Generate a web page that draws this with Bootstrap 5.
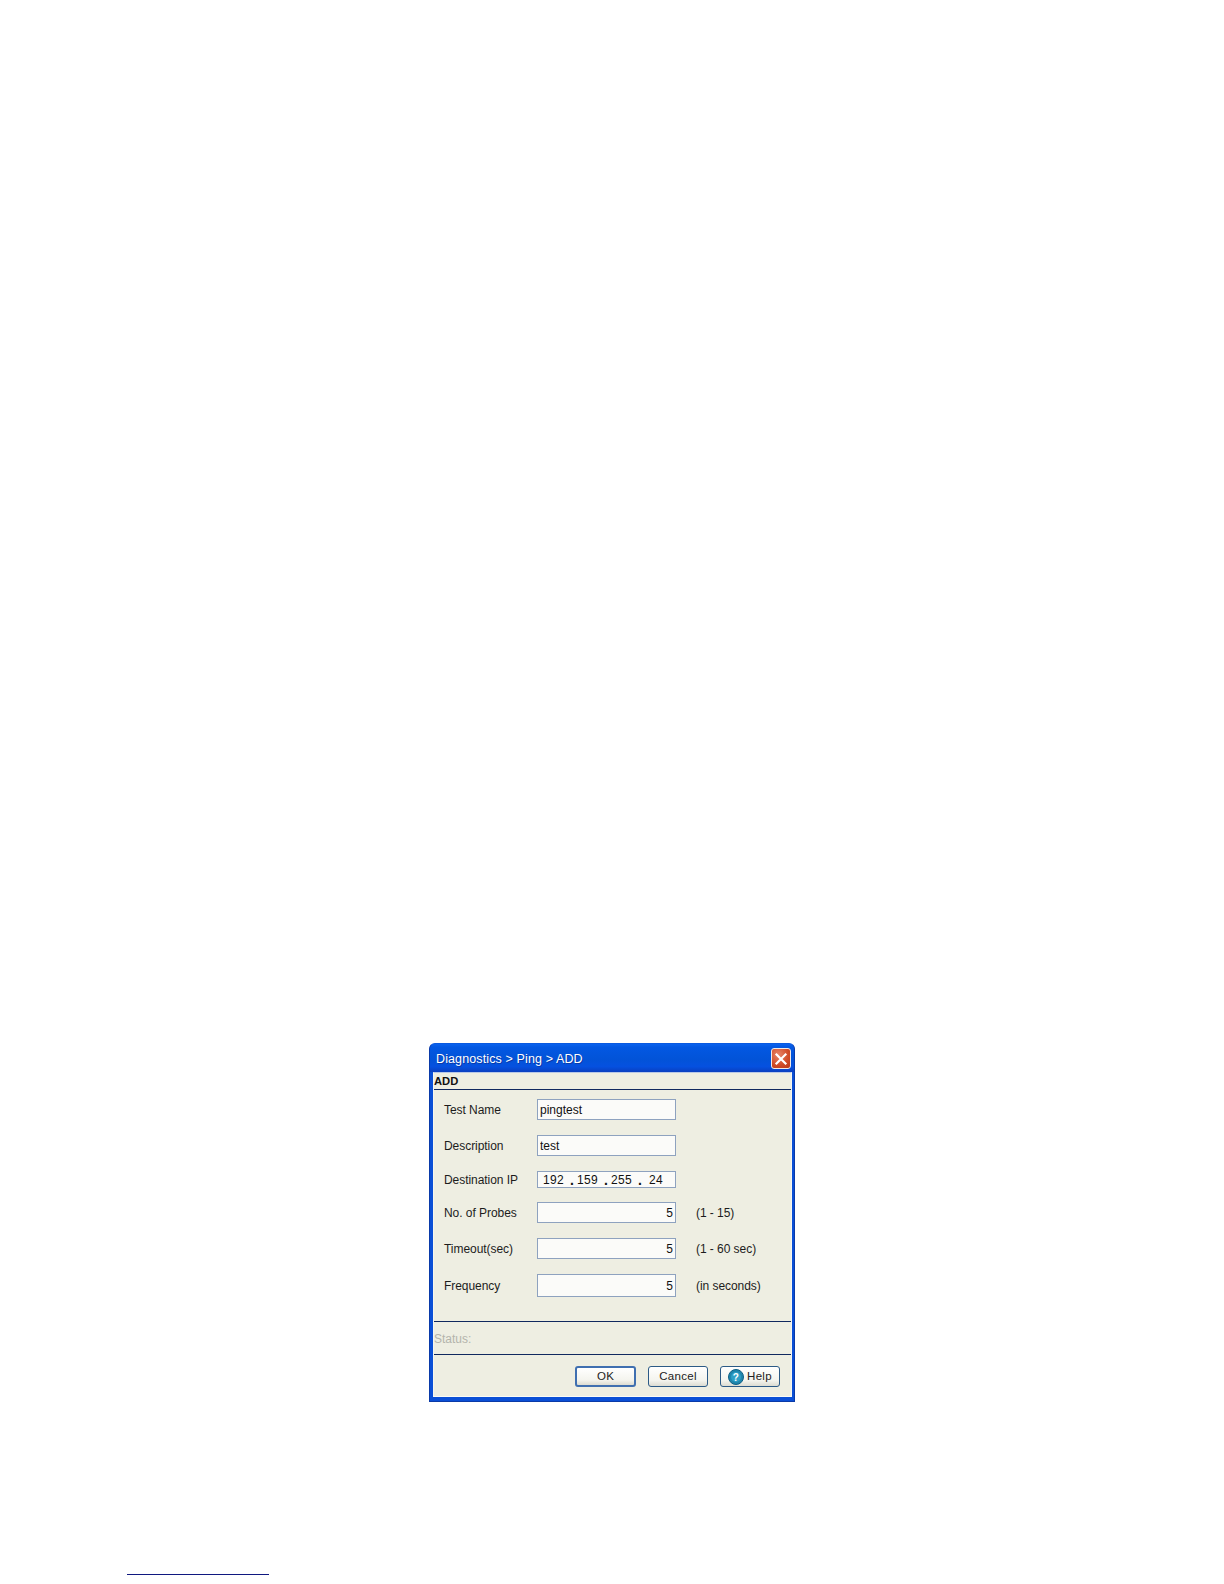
<!DOCTYPE html>
<html lang="en">
<head>
<meta charset="utf-8">
<title>Diagnostics &gt; Ping &gt; ADD</title>
<link rel="stylesheet" href="https://cdn.jsdelivr.net/npm/bootstrap@5.3.0/dist/css/bootstrap.min.css">
<style>
html,body{background:#fff;height:1584px;overflow:hidden}
body{font-family:"Liberation Sans",Arial,sans-serif;font-size:12px;color:#1c1c1c;padding-top:1043px}
.xp-window{width:366px;height:359px;margin-left:429px;background:#0a4fd6;border-radius:6px 6px 0 0;display:flex;flex-direction:column;border:1px solid #0a3aa8;border-top-color:#0a5ae0}
.xp-title{height:28px;flex:none;background:linear-gradient(180deg,#0a62ee 0%,#0358e2 12%,#0253d8 55%,#0551e0 80%,#0a3fc0 100%);border-radius:5px 5px 0 0;color:#fff;font-size:12.5px;letter-spacing:.12px;padding-left:6px;padding-right:3px;padding-top:3px;text-shadow:1px 1px 0 #0a3aa8}
.xp-close{width:20px;height:21px;padding:0;margin-top:-2px;border:1px solid #f3e9e4;border-radius:3px;background:radial-gradient(circle at 35% 30%,#e8866a,#cf4a25 60%,#b8391a);display:block}
.xp-close svg{display:block;margin:auto}
.xp-panel{flex:1;margin:0 2px 4px 3px;background:#eeeee2;border-top:1px solid #b9c8e6;border-left:1px solid #f6f6ee;border-right:1px solid #f6f6ee;border-bottom:1px solid #fbfbf5;display:flex;flex-direction:column;min-height:0}
.xp-head{height:17px;flex:none;border-bottom:1px solid #10285e;font-weight:700;font-size:11.2px;color:#111;line-height:17px}
.xp-form{padding:9px 0 0 10px;height:231px;flex:none}
.xp-row{display:flex;align-items:center;height:21px;margin-bottom:15px}
.xp-row.ip{height:17px;margin-bottom:14px}
.xp-row.last{height:23px;margin-bottom:0}
.xp-label{width:93px;flex:none;letter-spacing:-.05px;padding-top:1px}
.xp-note{margin-left:20px;letter-spacing:-.05px;padding-top:1px;font-size:12px}
.form-control.xp-input,.xp-ip{width:139px;height:100%;flex:none;padding:1px 2px 0;border:1px solid #8ea2bf;border-radius:0;background:#fbfbf9;font-size:12px;color:#111;box-shadow:none;line-height:1}
.xp-ip{display:flex;align-items:center;padding:0 0 0 5px;letter-spacing:.3px}
.xp-ip span{display:block}
.xp-oct{width:27px}
.xp-ip b{font-weight:700;font-size:14px;width:7px;display:block}
.xp-status{height:34px;flex:none;border-top:1px solid #10285e;border-bottom:1px solid #10285e;color:#b4b4ac;line-height:34px;font-size:12px}
.xp-foot{flex:1;display:flex;justify-content:flex-end;gap:12px;padding:11px 11px 0 0;align-items:flex-start}
.btn.xp-btn{width:60px;height:21px;padding:1px 0 0;border:1px solid #2c5a86;border-radius:3px;background:linear-gradient(180deg,#fff,#f4f4ee 70%,#dcdcd2);font-size:11.5px;color:#222;letter-spacing:.3px;line-height:1;display:flex;align-items:center;justify-content:center;gap:3px}
.btn.xp-btn.primary{border:2px solid #3f6fb0;width:61px}
.xp-help{display:block;width:16px;height:16px;flex:none}
.xp-rule{width:142px;height:1px;margin:172px 0 0 127px;background:#101880;border:0;opacity:1}
</style>
</head>
<body>
<div class="xp-window">
  <div class="xp-title d-flex align-items-center justify-content-between">
    <span>Diagnostics &gt; Ping &gt; ADD</span>
    <button type="button" class="xp-close" aria-label="Close"><svg width="14" height="14" viewBox="0 0 14 14"><path d="M2.5 2.5L11.5 11.5M11.5 2.5L2.5 11.5" stroke="#fff" stroke-width="2.2" stroke-linecap="square"/></svg></button>
  </div>
  <div class="xp-panel">
    <div class="xp-head">ADD</div>
    <div class="xp-form">
      <div class="xp-row"><span class="xp-label">Test Name</span><input class="form-control xp-input" value="pingtest"></div>
      <div class="xp-row"><span class="xp-label">Description</span><input class="form-control xp-input" value="test"></div>
      <div class="xp-row ip"><span class="xp-label">Destination IP</span><div class="xp-ip"><span class="xp-oct">192</span><b>.</b><span class="xp-oct">159</span><b>.</b><span class="xp-oct">255</span><b>.</b><span class="ms-1">24</span></div></div>
      <div class="xp-row"><span class="xp-label">No. of Probes</span><input class="form-control xp-input text-end" value="5"><span class="xp-note">(1 - 15)</span></div>
      <div class="xp-row"><span class="xp-label">Timeout(sec)</span><input class="form-control xp-input text-end" value="5"><span class="xp-note">(1 - 60 sec)</span></div>
      <div class="xp-row last"><span class="xp-label">Frequency</span><input class="form-control xp-input text-end" value="5"><span class="xp-note">(in seconds)</span></div>
    </div>
    <div class="xp-status">Status:</div>
    <div class="xp-foot">
      <button type="button" class="btn xp-btn primary">OK</button>
      <button type="button" class="btn xp-btn">Cancel</button>
      <button type="button" class="btn xp-btn"><svg class="xp-help" viewBox="0 0 16 16"><circle cx="8" cy="8" r="7.5" fill="#1f86ad" stroke="#0f5f85"/><circle cx="8" cy="8" r="5" fill="#2f9fc6"/><text x="8" y="11.5" text-anchor="middle" font-size="10" font-weight="700" font-family="Liberation Sans" fill="#fff">?</text></svg>Help</button>
    </div>
  </div>
</div>
<hr class="xp-rule">
<script src="https://cdn.jsdelivr.net/npm/bootstrap@5.3.0/dist/js/bootstrap.bundle.min.js"></script>
</body>
</html>
